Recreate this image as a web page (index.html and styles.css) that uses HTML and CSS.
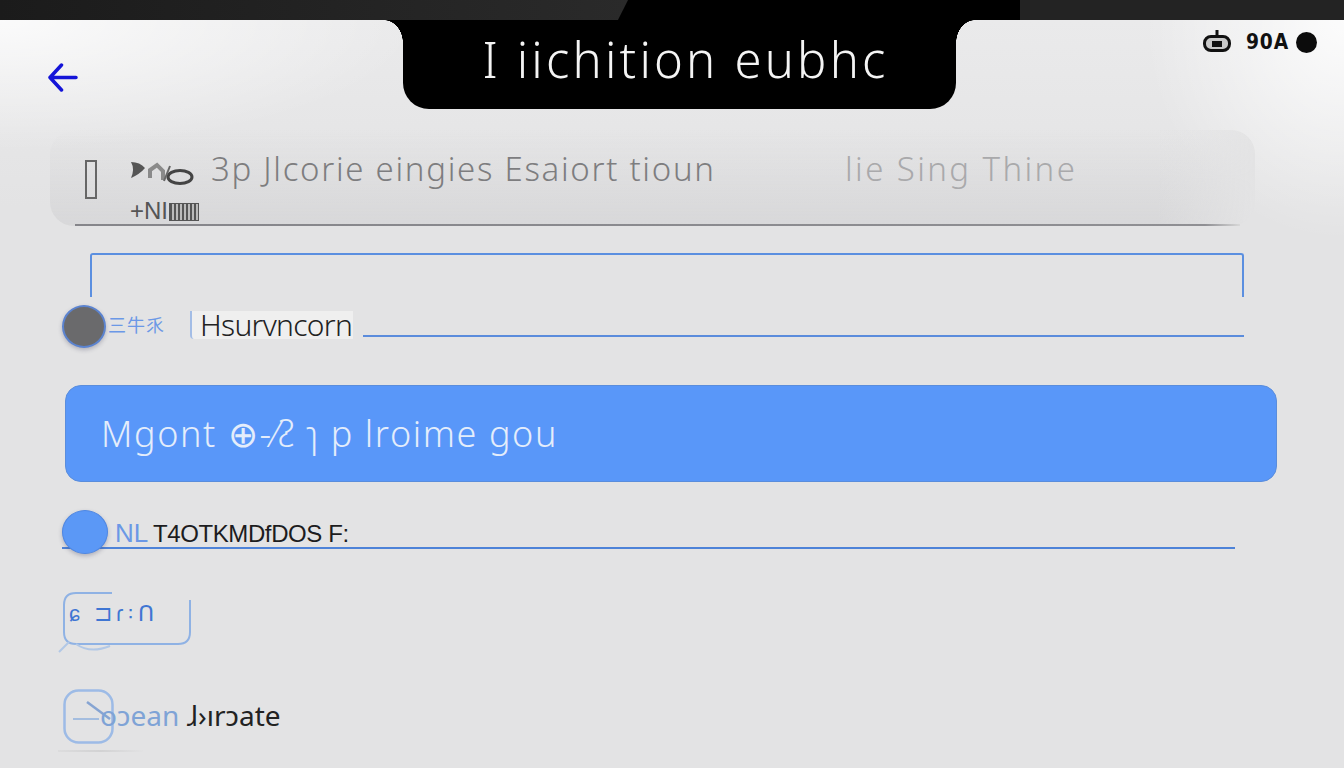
FILE: index.html
```html
<!DOCTYPE html>
<html lang="en">
<head>
    <meta charset="UTF-8">
    <title>Settings</title>
    <link rel="stylesheet" href="styles.css">
</head>
<body>
    <div class="topbar">
        <div class="topbar-left"></div>
        <div class="topbar-right"></div>
    </div>

    <div class="screen">
        <!-- Header -->
        <div class="header">
            <div class="back">
                <svg width="30" height="30" viewBox="0 0 30 30" fill="none" stroke="#1414d8" stroke-width="3.500" stroke-linecap="round" stroke-linejoin="round">
                    <path d="M13.500 2 2 14.500 13.500 27M2.500 14.500H28"/>
                </svg>
            </div>
            <div class="title">I iichition eubhc</div>
            <div class="status">
                <svg width="28" height="22" viewBox="0 0 28 22">
                    <path d="M14 0v7" stroke="#111" stroke-width="3"/>
                    <rect x="1.500" y="6.500" width="25" height="14" rx="6.500" fill="#c9c9c9" stroke="#111" stroke-width="3"/>
                    <rect x="9" y="11" width="10" height="6" fill="#111"/>
                </svg>
                <span class="status-text">90A</span>
                <span class="status-dot"></span>
            </div>
        </div>

        <!-- Info card -->
        <div class="info">
            <div class="info-row">
                <div class="info-box"></div>
                <div class="info-body">
                    <div class="info-line">
                        <svg class="info-icon" width="64" height="28" viewBox="0 0 64 28">
                            <path d="M1 5Q10 5 15 11 10 17 1 21 5 12 1 5Z" fill="#555"/>
                            <path d="M20 21V13L27 8 33 14V23" fill="none" stroke="#8a8a8a" stroke-width="4"/>
                            <ellipse cx="50" cy="20" rx="12" ry="6.500" fill="none" stroke="#444" stroke-width="3"/>
                            <path d="M40 9 34 24" stroke="#666" stroke-width="2"/>
                        </svg>
                        <span class="info-text">3p Jlcorie eingies Esaiort tioun</span>
                        <span class="info-faint">lie Sing Thine</span>
                    </div>
                    <div class="info-small">+NI<span class="info-mark"></span></div>
                </div>
            </div>
            <div class="info-rule"></div>
        </div>

        <!-- Field outline -->
        <div class="field"></div>
        <div class="row-one">
            <div class="dot dot-gray"></div>
            <span class="row-glyphs">三牛乑</span>
            <span class="row-label">Hsurvncorn</span>
            <div class="row-line"></div>
        </div>

        <button class="action">Mgont ⊕-⁄ᴤ ɿ p lroime gou</button>

        <div class="row-two">
            <div class="dot dot-blue"></div>
            <span class="row-mark">NL</span>
            <span class="row-caps">T4OTKMDfDOS F:</span>
        </div>

        <div class="chip">
            <svg class="chip-line" width="128" height="60" viewBox="0 0 128 60" fill="none" stroke="#8fb2e4" stroke-width="2">
                <path d="M50 1H14Q2 1 2 13V40Q2 52 14 52H116Q128 52 128 40V8"/>
                <path d="M-3 60 7 50M14 52Q28 62 48 54" stroke="#b2c8e6"/>
            </svg>
            ɕ ⊐ɾ꞉ꓵ
        </div>

        <div class="last">
            <svg class="last-box" width="51" height="55" viewBox="0 0 51 55" fill="none" stroke="#9dbbe6" stroke-width="2.500">
                <rect x="1.500" y="1.500" width="48" height="52" rx="14"/>
                <path d="M10 30H36" stroke="#8fb0de" stroke-width="1.500"/>
                <path d="M24 13 47 30" stroke="#86a4d2" stroke-width="2.500"/>
            </svg>
            <span class="last-text"><span class="last-fade">oɔean</span> ɺ›ırɔate</span>
        </div>
        <div class="last-rule"></div>
    </div>
</body>
</html>
```

FILE: styles.css
```css
html, body {
    margin: 0;
    height: 100%;
    overflow: hidden;
}

body {
    font-family: "Liberation Sans", Arial, sans-serif;
    background: #e2e2e3;
}

/* Top strip */
.topbar {
    display: flex;
    justify-content: space-between;
    height: 20px;
    background: #000;
}

.topbar-left {
    width: 628px;
    background: linear-gradient(90deg, #1b1b1b, #2a2a2a);
    clip-path: polygon(0 0, 100% 0, 98.400% 100%, 0 100%);
}

.topbar-right {
    width: 324px;
    background: #232323;
}

.screen {
    height: 748px;
    background:
        radial-gradient(ellipse 200px 220px at 100% 0, rgba(255, 255, 255, 0.85), rgba(255, 255, 255, 0)),
        radial-gradient(ellipse 420px 130px at 0 0, rgba(255, 255, 255, 0.8), rgba(255, 255, 255, 0)),
        linear-gradient(180deg, #eaeaeb 0, #e3e3e4 25%, #e3e3e4 100%);
}

/* Header */
.header {
    display: grid;
    grid-template-columns: 403px 553px 1fr;
    height: 89px;
}

.back {
    padding: 43px 0 0 48px;
}

.title {
    position: relative;
    padding-left: 12px;
    background: #000;
    color: #f4f4f4;
    font-family: "Noto Sans", sans-serif;
    font-size: 49px;
    font-weight: 300;
    line-height: 78px;
    letter-spacing: 3.200px;
    text-align: center;
    border-radius: 0 0 26px 26px;
}

.title::before,
.title::after {
    content: "";
    position: absolute;
    top: 0;
    width: 19px;
    height: 23px;
}

.title::before {
    left: -19px;
    background: radial-gradient(ellipse 19px 23px at 0 100%, transparent 98%, #000 100%);
}

.title::after {
    right: -19px;
    background: radial-gradient(ellipse 19px 23px at 100% 100%, transparent 98%, #000 100%);
}

.status {
    display: flex;
    align-items: flex-start;
    padding: 10px 0 0 247px;
}

.status-text {
    margin: 0 0 0 15px;
    width: 50px;
    color: #111;
    font-family: "DejaVu Sans", sans-serif;
    font-size: 22px;
    font-weight: bold;
    line-height: 24px;
    letter-spacing: 1px;
    transform: scaleX(0.850);
    transform-origin: left;
}

.status-dot {
    width: 21px;
    height: 21px;
    margin: 2px 0 0 0;
    border-radius: 50%;
    background: #0c0c0c;
}

/* Info card */
.info {
    width: 1205px;
    height: 96px;
    margin: 21px 0 0 50px;
    border-radius: 24px;
    background:
        linear-gradient(90deg, rgba(227, 227, 228, 0) 92%, #e3e3e4 100%),
        linear-gradient(180deg, rgba(205, 205, 207, 0), rgba(205, 205, 207, 0.5));
    display: flex;
    flex-direction: column;
    justify-content: space-between;
}

.info-row {
    display: flex;
    padding: 21px 0 0 35px;
}

.info-box {
    width: 8px;
    height: 35px;
    margin-top: 9px;
    border: 2px solid #666;
}

.info-body {
    margin-left: 33px;
}

.info-line {
    display: flex;
    align-items: center;
    height: 34px;
}

.info-icon {
    flex: none;
    margin-top: 6px;
}

.info-text {
    flex: none;
    width: 634px;
    margin-left: 17px;
    color: #7d7d7f;
    font-family: "Noto Sans", sans-serif;
    font-size: 33px;
    font-weight: 300;
    letter-spacing: 1.700px;
    white-space: nowrap;
}

.info-faint {
    color: #a9a9ab;
    font-family: "Noto Sans", sans-serif;
    font-size: 33px;
    font-weight: 300;
    letter-spacing: 2.400px;
    white-space: nowrap;
}

.info-small {
    display: flex;
    margin-top: 15px;
    color: #555;
    font-size: 24px;
    line-height: 22px;
}

.info-mark {
    width: 28px;
    height: 16px;
    margin: 3px 0 0 1px;
    border: 1px solid #555;
    background: repeating-linear-gradient(90deg, #555 0 2px, #bbb 2px 4px);
}

.info-rule {
    height: 2px;
    margin: 0 15px 0 25px;
    background: linear-gradient(90deg, #85858a, #8f8f93 97%, #d8d8d8);
}

/* Field outline */
.field {
    width: 1150px;
    height: 42px;
    margin: 27px 0 0 90px;
    border: 2px solid #5b8fe0;
    border-bottom: 0;
    border-radius: 3px 3px 0 0;
}

.row-one {
    display: flex;
    align-items: center;
    width: 1182px;
    height: 42px;
    margin: 8px 0 0 62px;
}

.dot {
    flex: none;
    border-radius: 50%;
    box-sizing: border-box;
    box-shadow: 0 2px 4px rgba(60, 60, 90, 0.3);
}

.dot-gray {
    width: 44px;
    height: 43px;
    background: #6a6a6c;
    border: 2px solid #5b83cf;
}

.dot-blue {
    width: 46px;
    height: 44px;
    background: #5b98f6;
    border: 1px solid #4f87e2;
}

.row-glyphs {
    width: 82px;
    margin: -4px 0 0 2px;
    color: #6b98e6;
    font-family: "Noto Sans CJK SC", sans-serif;
    font-size: 18px;
    line-height: 30px;
    letter-spacing: 1px;
}

.row-label {
    flex: none;
    width: 153px;
    padding-left: 8px;
    margin-bottom: 2px;
    color: #222;
    background: #efefef;
    border-left: 2px solid #a3bde6;
    border-radius: 0 0 0 4px;
    font-family: "Noto Sans", sans-serif;
    font-size: 30px;
    line-height: 28px;
    letter-spacing: -0.700px;
    font-weight: 300;
    white-space: nowrap;
}

.row-line {
    flex: 1;
    height: 2px;
    margin: 20px 0 0 10px;
    background: #5b8cdc;
}

/* Main button */
.action {
    display: block;
    box-sizing: border-box;
    width: 1212px;
    height: 97px;
    margin: 38px 0 0 65px;
    padding: 0 0 0 35px;
    border: 1px solid #5a8ddc;
    border-radius: 16px;
    background: #5997f9;
    color: #e4edfb;
    font-family: "Noto Sans", sans-serif;
    font-size: 36px;
    font-weight: 300;
    letter-spacing: 1.600px;
    text-align: left;
}

.row-two {
    display: flex;
    align-items: center;
    box-sizing: border-box;
    width: 1173px;
    height: 39px;
    margin: 28px 0 0 62px;
    border-bottom: 2px solid #4e83d8;
}

.row-two .dot {
    margin: 3px 0 -3px;
}

.row-mark {
    flex: none;
    margin: 10px 0 0 7px;
    width: 38px;
    color: #6b98e6;
    font-size: 26px;
    font-weight: 100;
}

.row-caps {
    margin-top: 11px;
    color: #1c1c20;
    font-size: 24px;
    letter-spacing: -0.400px;
    white-space: nowrap;
}

/* Chip */
.chip {
    position: relative;
    box-sizing: border-box;
    width: 128px;
    height: 53px;
    margin: 43px 0 0 62px;
    padding: 9px 0 0 7px;
    color: #3f76d3;
    font-size: 22px;
    letter-spacing: 4px;
}

.chip-line {
    position: absolute;
    left: 0;
    top: 0;
    overflow: visible;
}

/* Last row */
.last {
    display: flex;
    align-items: center;
    height: 56px;
    margin: 43px 0 0 63px;
}

.last-box {
    flex: none;
}

.last-text {
    margin: -2px 0 0 -14px;
    color: #222;
    font-family: "Noto Sans", sans-serif;
    font-size: 28px;
    white-space: nowrap;
}

.last-fade {
    color: #7fa3d6;
}

.last-rule {
    width: 85px;
    height: 2px;
    margin: 6px 0 0 58px;
    background: linear-gradient(90deg, #dcdcdd, #d2d2d3, #e2e2e3);
}
```
